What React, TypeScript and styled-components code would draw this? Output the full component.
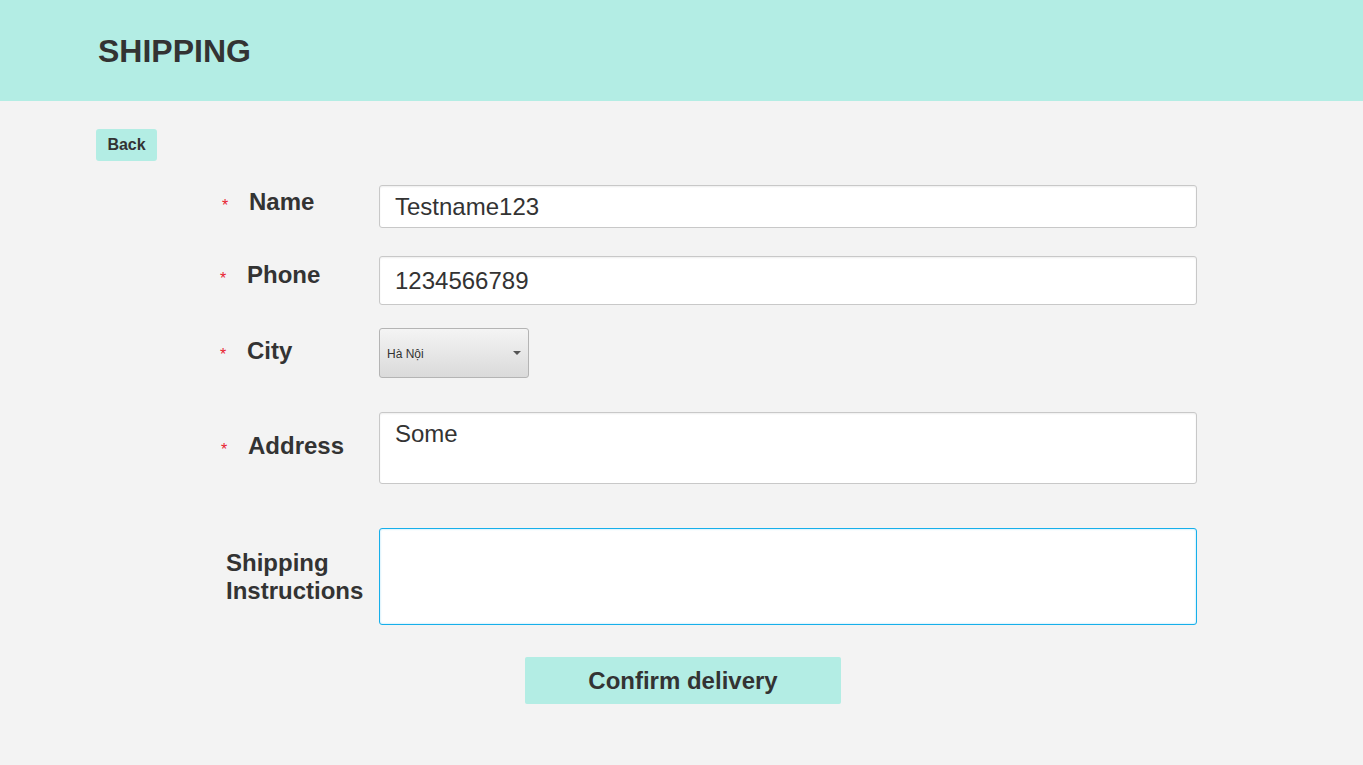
import React from "react";
import styled, { createGlobalStyle } from "styled-components";

const GlobalStyle = createGlobalStyle`
  html, body {
    margin: 0;
    padding: 0;
    background: #f3f3f3;
    font-family: "Liberation Sans", Arial, sans-serif;
    color: #333;
  }
  * { box-sizing: border-box; }
`;

const Page = styled.div`
  min-height: 765px;
  background: #f3f3f3;
`;

const Header = styled.header`
  height: 101px;
  background: #b3ede4;
  display: flex;
  align-items: center;
  padding: 2px 0 0 98px;
`;

const Title = styled.h1`
  margin: 0;
  font-size: 32px;
  font-weight: 700;
  color: #333;
`;

const Main = styled.main`
  padding: 28px 96px 0;
`;

const BackButton = styled.button`
  width: 61px;
  height: 32px;
  border: none;
  border-radius: 3px;
  background: #b3ede4;
  color: #333;
  font-family: "Liberation Sans", Arial, sans-serif;
  font-size: 16px;
  font-weight: 700;
  padding: 0;
  cursor: pointer;
`;

const Form = styled.form`
  display: flex;
  flex-direction: column;
  margin-top: 24px;
`;

const Row = styled.div<{ $top: number }>`
  display: grid;
  grid-template-columns: 159px 818px;
  align-items: center;
  margin: ${(p) => p.$top}px 0 0 124px;
`;

const LabelCell = styled.div<{ $lift: number; $indent: number }>`
  display: flex;
  align-items: center;
  padding-left: ${(p) => p.$indent}px;
  transform: translateY(${(p) => -p.$lift}px);
`;

const Star = styled.span`
  color: #e8232f;
  font-size: 16px;
  width: 27px;
  padding-top: 8px;
`;

const Label = styled.label`
  font-size: 24px;
  font-weight: 700;
  line-height: 28px;
  color: #333;
`;

const TextInput = styled.input<{ $h: number }>`
  width: 818px;
  height: ${(p) => p.$h}px;
  border: 1px solid #c8c8c8;
  border-radius: 3px;
  background: #fff;
  box-shadow: inset 0 1px 2px rgba(0, 0, 0, 0.07);
  padding: 0 15px;
  font-family: "Liberation Sans", Arial, sans-serif;
  font-size: 24px;
  color: #333;
  outline: none;
`;

const TextArea = styled.textarea<{ $h: number; $focus?: boolean }>`
  width: 818px;
  height: ${(p) => p.$h}px;
  border: 1px solid ${(p) => (p.$focus ? "#16afea" : "#c8c8c8")};
  border-radius: 3px;
  background: #fff;
  box-shadow: ${(p) =>
    p.$focus
      ? "inset 0 0 2px rgba(22, 175, 234, 0.45)"
      : "inset 0 1px 2px rgba(0, 0, 0, 0.07)"};
  padding: 7px 15px;
  font-family: "Liberation Sans", Arial, sans-serif;
  font-size: 24px;
  line-height: 28px;
  color: #333;
  resize: none;
  outline: none;
  display: block;
`;

const SelectBox = styled.div`
  width: 150px;
  height: 50px;
  border: 1px solid #b4b4b4;
  border-radius: 3px;
  background: linear-gradient(#f4f4f4, #dadada);
  display: flex;
  align-items: center;
  justify-content: space-between;
  padding: 1px 7px 0 7px;
  font-family: "Liberation Sans", Arial, sans-serif;
  font-size: 12px;
  color: #333;
`;

const Caret = styled.svg`
  width: 8px;
  height: 4px;
  margin-top: -2px;
`;

const Actions = styled.div`
  display: flex;
  justify-content: center;
  margin-top: 32px;
  padding-left: 3px;
`;

const ConfirmButton = styled.button`
  width: 316px;
  height: 47px;
  border: none;
  border-radius: 2px;
  background: #b3ede4;
  color: #333;
  font-family: "Liberation Sans", Arial, sans-serif;
  font-size: 24px;
  font-weight: 700;
  cursor: pointer;
`;

export default function App() {
  return (
    <Page>
      <GlobalStyle />
      <Header>
        <Title>SHIPPING</Title>
      </Header>
      <Main>
        <BackButton type="button">Back</BackButton>
        <Form onSubmit={(e) => e.preventDefault()}>
          <Row $top={0}>
            <LabelCell $lift={5} $indent={2}>
              <Star>*</Star>
              <Label>Name</Label>
            </LabelCell>
            <TextInput $h={43} defaultValue="Testname123" />
          </Row>
          <Row $top={28}>
            <LabelCell $lift={6} $indent={0}>
              <Star>*</Star>
              <Label>Phone</Label>
            </LabelCell>
            <TextInput $h={49} defaultValue="1234566789" />
          </Row>
          <Row $top={23}>
            <LabelCell $lift={2} $indent={0}>
              <Star>*</Star>
              <Label>City</Label>
            </LabelCell>
            <SelectBox role="combobox">
              <span>Hà Nội</span>
              <Caret viewBox="0 0 8 4">
                <path d="M0 0 L8 0 L4 4 Z" fill="#555" />
              </Caret>
            </SelectBox>
          </Row>
          <Row $top={34}>
            <LabelCell $lift={2} $indent={1}>
              <Star>*</Star>
              <Label>Address</Label>
            </LabelCell>
            <TextArea $h={72} defaultValue="Some" />
          </Row>
          <Row $top={44}>
            <LabelCell $lift={0} $indent={6}>
              <Label>
                Shipping
                <br />
                Instructions
              </Label>
            </LabelCell>
            <TextArea $h={97} $focus />
          </Row>
          <Actions>
            <ConfirmButton type="submit">Confirm delivery</ConfirmButton>
          </Actions>
        </Form>
      </Main>
    </Page>
  );
}
